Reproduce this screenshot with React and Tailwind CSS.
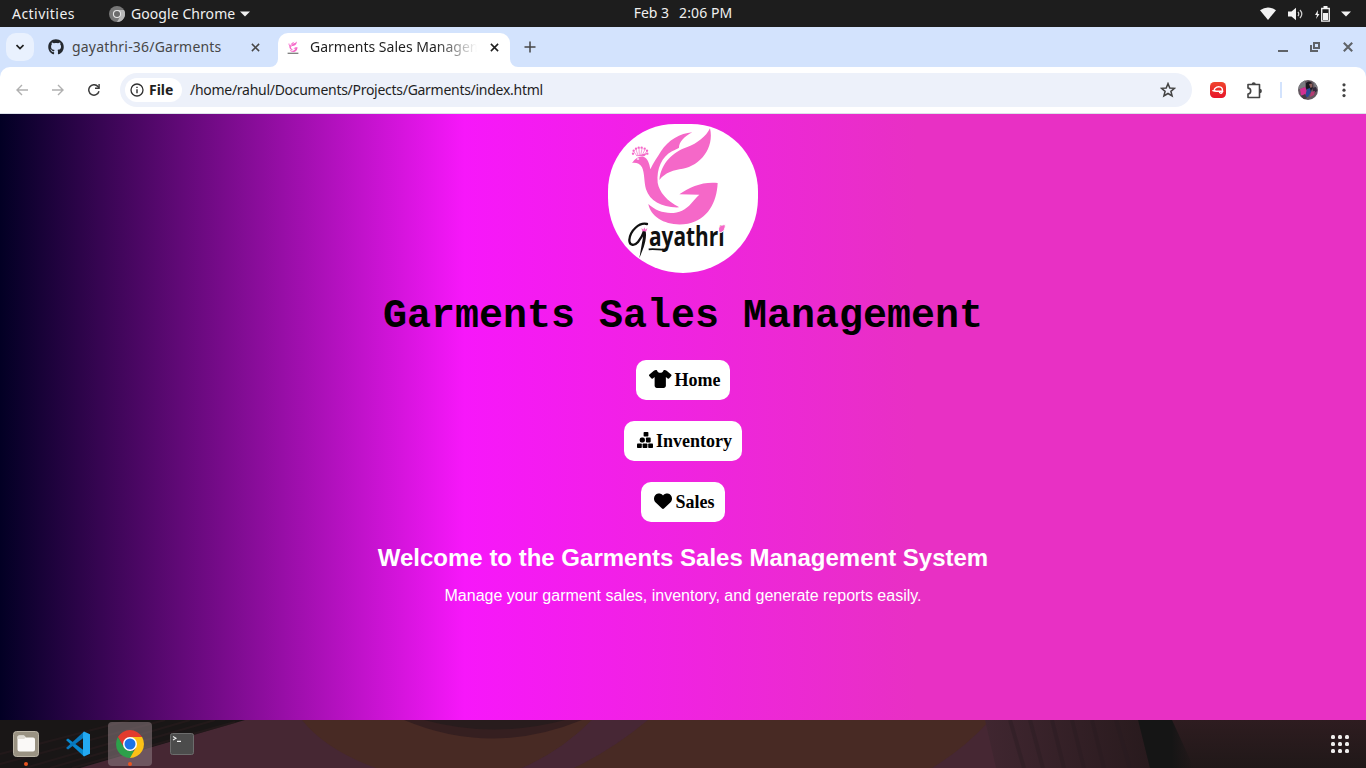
import { FaShirt, FaHeart } from "react-icons/fa6";
import { FaGithub } from "react-icons/fa";

function PeacockMark() {
  return (
    <g fill="#f568c8">
      <path d="M330 37C318 62 292 82 262 93C220 108 184 138 178 192C196 168 222 162 248 158C300 150 344 96 330 37Z" />
      <path d="M277 49C240 52 205 72 183 106C172 124 160 140 151 160C148 142 143 127 132 123C120 119 108 125 96 141C108 139 120 143 126 154C134 170 132 200 138 220C150 256 186 276 238 274C200 254 178 228 173 200C169 158 186 122 216 106C226 101 233 98 237 95C237 78 254 60 277 49Z" />
      <path d="M145 264C172 290 214 298 246 284C268 274 280 252 298 236L238 235C270 212 310 196 353 201C350 260 324 310 264 323C206 334 152 306 145 264Z" />
      <circle cx="99" cy="113" r="3.5" /><circle cx="101" cy="104" r="3.5" /><circle cx="108" cy="98" r="3.5" /><circle cx="116" cy="95" r="3.5" />
      <circle cx="125" cy="95" r="3.5" /><circle cx="134" cy="98" r="3.5" /><circle cx="141" cy="104" r="3.5" /><circle cx="142" cy="113" r="3.5" />
      <path d="M110 119H134L140 112M111 120L101 106M114 118L108 101M118 118L117 97M122 118L126 98M126 119L134 102M129 121L140 106" stroke="#f568c8" strokeWidth="2" />
      <ellipse cx="114" cy="129" rx="4" ry="2" fill="#fff" />
    </g>
  );
}

function Logo() {
  return (
    <svg viewBox="24 24 450 447" className="h-[149px] w-[150px] rounded-t-[67px] rounded-b-[75px] bg-white">
      <PeacockMark />
      <path d="M141 324C118 318 90 344 88 372C88 390 104 390 114 378C122 368 128 358 131 348" stroke="#111" strokeWidth="7" fill="none" strokeLinecap="round" />
      <path d="M128 346H137C140 360 136 378 131 394L118 427L126 380C129 368 130 356 128 346Z" fill="#111" />
      <path d="M127 346L124 336L130 341L133 334L136 341L142 336L139 346Z" fill="#f568c8" />
      <text x="147" y="389" textLength="227" lengthAdjust="spacingAndGlyphs" fontSize="78" fontWeight="700" fill="#111" className="font-['Open_Sans',sans-serif]">ayathri</text>
      <path d="M146 400C162 398 184 401 202 402" stroke="#111" strokeWidth="5" fill="none" />
      <path d="M357 348C352 334 360 326 376 326C376 340 370 350 358 350Z" fill="#f568c8" stroke="#fff" strokeWidth="3" />
    </svg>
  );
}

function CloseIcon({ className }) {
  return (
    <svg viewBox="0 0 10 10" className={className}>
      <path d="M1 1L9 9M9 1L1 9" stroke="currentColor" strokeWidth="1.7" fill="none" />
    </svg>
  );
}

function TopBar() {
  return (
    <div className="grid h-[27px] grid-cols-[1fr_auto_1fr] items-center bg-[#1d1d1d] text-[14px] leading-[27px] text-[#f0f0f0]">
      <div className="flex items-center pl-3">
        <span className="w-[63px] whitespace-nowrap tracking-[0.46px]">Activities</span>
        <svg viewBox="0 0 16 16" className="ml-[34px] h-4 w-4">
          <circle cx="8" cy="8" r="8" fill="#777" />
          <path d="M8 4H15A8 8 0 0 1 8 16L11.5 10Z" fill="#b9b9b9" />
          <circle cx="8" cy="8" r="4.1" fill="#e8e8e8" />
          <circle cx="8" cy="8" r="3" fill="#6b6b6b" />
        </svg>
        <span className="ml-[6px] w-[104px] whitespace-nowrap tracking-[0.07px]">Google Chrome</span>
        <svg viewBox="0 0 10 6" className="ml-[5px] h-[6px] w-[10px]"><path d="M0 .5H10L5 5.5Z" fill="#f0f0f0" /></svg>
      </div>
      <div className="flex gap-[10px] pb-[2px] leading-[25px] whitespace-nowrap"><span>Feb 3</span><span className="tracking-[0.1px]">2:06 PM</span></div>
      <div className="flex items-center justify-end pr-[15px]">
        <svg viewBox="0 0 16 13" className="h-[13px] w-4"><path d="M0 3.2Q8-2 16 3.2L8 13Z" fill="#f2f2f2" /></svg>
        <svg viewBox="0 0 16 14" className="ml-3 h-[14px] w-4">
          <path d="M0 4.5H3.5L8 .8V13.2L3.5 9.5H0Z" fill="#f2f2f2" />
          <path d="M10 4.8Q11.5 7 10 9.2M12 3Q15.6 7 12 11" stroke="#d0d0d0" strokeWidth="1.2" fill="none" />
        </svg>
        <svg viewBox="0 0 15 16" className="ml-[11px] h-4 w-[15px]">
          <path d="M3 4L0 9H2L1 13L4.5 8H2.7Z" fill="#f2f2f2" />
          <path d="M6.7 2.5H14.3V15.2H6.7Z" stroke="#f2f2f2" strokeWidth="1.3" fill="none" />
          <path d="M8.5 0H12.5V2.5H8.5ZM8 7H13V14H8Z" fill="#f2f2f2" />
        </svg>
        <svg viewBox="0 0 10 6" className="ml-[11px] h-[6px] w-[10px]"><path d="M0 .5H10L5 5.5Z" fill="#f2f2f2" /></svg>
      </div>
    </div>
  );
}

function TabStrip() {
  return (
    <div className="flex h-10 bg-[#d3e3fd] text-[14px]">
      <div className="ml-[6px] mt-[6px] flex h-7 w-7 items-center justify-center rounded-[10px] bg-[#e9f1fe]">
        <svg viewBox="0 0 8 6" className="h-[6px] w-2"><path d="M.5 1L4 4.5L7.5 1" stroke="#1f1f1f" strokeWidth="1.7" fill="none" /></svg>
      </div>
      <div className="flex h-10 w-[236px] items-center pl-[14px] text-[#474747]">
        <FaGithub className="size-[16px] text-[#24292f]" />
        <span className="ml-2 w-[149px] pb-[2px] whitespace-nowrap tracking-[0.2px]">gayathri-36/Garments</span>
        <CloseIcon className="ml-[30px] size-[9px]" />
      </div>
      <svg viewBox="0 0 8 8" className="h-2 w-2 self-end"><path d="M8 0A8 8 0 0 1 0 8H8Z" fill="#fff" /></svg>
      <div className="mt-[6px] flex h-[34px] w-[232px] items-center rounded-t-[10px] bg-white pb-[6px] pl-[9px] text-[#1f1f1f]">
        <svg viewBox="80 30 300 350" className="h-[13px] w-3">
          <PeacockMark />
          <path d="M85 345H375V375H85Z" fill="#666" />
        </svg>
        <span className="ml-[11px] w-[167px] overflow-hidden bg-linear-to-r from-[#1f1f1f] from-75% to-transparent bg-clip-text pb-[2px] whitespace-nowrap text-transparent">Garments Sales Management</span>
        <CloseIcon className="ml-[13px] size-[9px]" />
      </div>
      <svg viewBox="0 0 8 8" className="h-2 w-2 self-end"><path d="M0 0A8 8 0 0 0 8 8H0Z" fill="#fff" /></svg>
      <svg viewBox="0 0 12 12" className="ml-[6px] mt-[14px] size-3"><path d="M6 .5V11.5M.5 6H11.5" stroke="#474747" strokeWidth="1.5" /></svg>
      <div className="ml-auto flex items-center pr-[13px] text-[#5f6368]">
        <svg viewBox="0 0 10 10" className="size-[10px]"><path d="M0 9H10" stroke="currentColor" strokeWidth="2" /></svg>
        <svg viewBox="0 0 10 10" className="ml-[22px] size-[10px]"><path d="M4 1H9V6H4ZM1 3V9H8" stroke="currentColor" strokeWidth="2" fill="none" /></svg>
        <svg viewBox="0 0 10 10" className="ml-[23px] size-[10px]"><path d="M.8.8L9.2 9.2M9.2.8L.8 9.2" stroke="currentColor" strokeWidth="2.1" /></svg>
      </div>
    </div>
  );
}

function Toolbar() {
  return (
    <div className="bg-[#d3e3fd]">
      <div className="flex h-[47px] items-center rounded-t-[10px] border-b border-[#dde2ea] bg-white pr-[16px]">
        <svg viewBox="0 0 12 12" className="ml-4 size-3 text-[#b0b0b0]"><path d="M12 6H1.2M6 1L1 6L6 11" stroke="currentColor" strokeWidth="1.4" fill="none" /></svg>
        <svg viewBox="0 0 12 12" className="ml-6 size-3 text-[#b0b0b0]"><path d="M0 6H10.8M6 1L11 6L6 11" stroke="currentColor" strokeWidth="1.4" fill="none" /></svg>
        <svg viewBox="0 0 12 12" className="ml-6 size-3 text-[#3c3c3c]">
          <path d="M11 7.3A5.2 5.2 0 1 1 9.9 2.5L10.9 3.7" stroke="currentColor" strokeWidth="1.5" fill="none" />
          <path d="M11.8 0V4.9H7V3.5H10.4V0Z" fill="currentColor" />
        </svg>
        <div className="ml-5 flex h-[34px] w-[1072px] items-center rounded-full bg-[#edf1fa] pl-[5px] text-[14px] text-[#1f1f1f]">
          <div className="flex h-6 w-[57px] items-center rounded-full bg-white pl-[5px]">
            <svg viewBox="0 0 14 14" className="size-[14px]">
              <circle cx="7" cy="7" r="6" stroke="#303030" strokeWidth="1.3" fill="none" />
              <path d="M7 6.2V10.2M7 3.7V5" stroke="#303030" strokeWidth="1.4" />
            </svg>
            <span className="ml-[5px] pb-[1px] text-[14px] font-bold">File</span>
          </div>
          <span className="ml-2 pb-[2px] whitespace-nowrap tracking-[-0.28px]">/home/rahul/Documents/Projects/Garments/index.html</span>
          <svg viewBox="0 0 16 16" className="ml-auto mr-4 size-4"><path d="M8 1.6L9.8 6L14.5 6.3L10.9 9.3L12.1 14L8 11.5L3.9 14L5.1 9.3L1.5 6.3L6.2 6Z" stroke="#444" strokeWidth="1.5" fill="none" /></svg>
        </div>
        <svg viewBox="0 0 16 16" className="ml-[18px] size-4">
          <defs><linearGradient id="ext" x1="0" y1="0" x2="0" y2="1"><stop offset="0" stopColor="#f0452c" /><stop offset="1" stopColor="#e6142a" /></linearGradient></defs>
          <rect width="16" height="16" rx="4.5" fill="url(#ext)" />
          <path d="M5.2 6.2C3.2 8 5.2 9.2 7 9.2H12.8M5.2 6.2C7.4 4.2 12 4.2 12.4 7.5C12.7 9.5 12.2 10.8 10.8 11.4C9.8 11.4 9.4 10.6 9.2 9.2M2.8 8.7Q4.5 9.3 7 9.2" stroke="#fff" strokeWidth="1.4" fill="none" strokeLinecap="round" />
        </svg>
        <svg viewBox="0 0 17 17" className="ml-5 size-[17px]">
          <path d="M2 2.5H13.5V15.5H2V12C5.6 11.8 5.6 6.3 2 6.1Z" stroke="#444" strokeWidth="1.6" fill="none" strokeLinejoin="round" />
          <path d="M5.6 2.4A2.1 2.1 0 0 1 9.8 2.4ZM13.7 6.8A2.2 2.2 0 0 1 13.7 11.2Z" fill="#444" />
        </svg>
        <div className="ml-[17px] h-4 w-[2px] bg-[#d3e3fd]" />
        <svg viewBox="0 0 20 20" className="ml-4 size-5 rounded-full">
          <path d="M0 0H20V20H0Z" fill="#645860" />
          <path d="M0 0H7V7L2 9H0ZM15 0H20V8H17Z" fill="#7b7b80" />
          <path d="M8 3Q11 0 14 3L15 7L12 13L9 12L8 8Z" fill="#1b161e" />
          <path d="M2 9L7 7L9 11L7 16L3 15Z" fill="#d23092" />
          <path d="M9 9L12 8L13 12L10 17L7 17Z" fill="#2b4798" />
          <path d="M11 4L14 3.5L14.5 7L12.5 8Z" fill="#8d5f5c" />
          <path d="M14 8L18 7L19 11L16 13Z" fill="#33283a" />
          <path d="M13 12L17 11L16 15L12 17Z" fill="#b53a72" />
          <path d="M3 16L7 14L9 18L6 20Z" fill="#453a44" />
        </svg>
        <svg viewBox="0 0 4 16" className="ml-[24px] h-4 w-1" fill="#444"><circle cx="2" cy="2.8" r="1.6" /><circle cx="2" cy="8.2" r="1.6" /><circle cx="2" cy="13.6" r="1.6" /></svg>
      </div>
    </div>
  );
}

function PyramidIcon() {
  return (
    <svg viewBox="0 0 16 16" className="h-4 w-4 -translate-y-px" fill="#000">
      <rect x="6.6" y="0" width="4.8" height="4.6" rx=".8" />
      <rect x="2.7" y="5.4" width="5.2" height="5.2" rx="2" />
      <rect x="8.9" y="5.6" width="4.8" height="4.8" rx=".8" />
      <rect x="0" y="11.4" width="4.8" height="4.6" rx=".8" />
      <rect x="5.6" y="11.4" width="4.8" height="4.6" rx=".8" />
      <rect x="11.2" y="11.4" width="4.8" height="4.6" rx=".8" />
    </svg>
  );
}

function NavButton({ icon, label, className }) {
  return (
    <button className={"flex h-10 items-center rounded-[10px] bg-white pl-[13px] font-['Liberation_Serif',serif] text-[18px] font-bold whitespace-nowrap text-black " + className}>
      {icon}
      {label}
    </button>
  );
}

function Content() {
  return (
    <main className="flex h-[606px] flex-col items-center bg-[linear-gradient(90deg,#020024_0%,#f717fa_34%,#e830c4_67%)] pt-[10px]">
      <Logo />
      <h1 className="mt-[21px] font-['Liberation_Mono',monospace] text-[40px] leading-[46px] font-bold whitespace-nowrap text-black">Garments Sales Management</h1>
      <nav className="mt-5 flex flex-col items-center gap-[21px]">
        <NavButton className="w-[94px] gap-[3px]" icon={<FaShirt className="h-[18px] w-[22.5px] -translate-y-px" />} label="Home" />
        <NavButton className="w-[118px] gap-[3px]" icon={<PyramidIcon />} label="Inventory" />
        <NavButton className="w-[84px] gap-[3.5px]" icon={<FaHeart className="size-[18px] -translate-y-px" />} label="Sales" />
      </nav>
      <h2 className="mt-[22px] font-['Liberation_Sans',sans-serif] text-[24px] leading-[28px] font-bold text-white">Welcome to the Garments Sales Management System</h2>
      <p className="mt-[14px] font-['Liberation_Sans',sans-serif] text-[16px] leading-[19px] text-white">Manage your garment sales, inventory, and generate reports easily.</p>
    </main>
  );
}

function DockWallpaper() {
  return (
    <svg viewBox="0 0 1366 48" className="col-start-1 row-start-1 h-12 w-full" preserveAspectRatio="none">
      <defs>
        <linearGradient id="folds" x1="0" x2="1"><stop offset="0" stopColor="#402630" /><stop offset="1" stopColor="#281a1d" /></linearGradient>
        <linearGradient id="shade" x1="0" y1="0" x2="0" y2="1"><stop offset="0" stopColor="#2e1c20" /><stop offset="1" stopColor="#201818" /></linearGradient>
        <linearGradient id="dark" x1="0" x2="1"><stop offset="0" stopColor="#151515" /><stop offset=".6" stopColor="#151515" /><stop offset="1" stopColor="#151515" stopOpacity="0" /></linearGradient>
      </defs>
      <path d="M0 0H1366V48H0Z" fill="#462733" />
      <path d="M0 0H245L80 48H0Z" fill="#191616" />
      <path d="M0 34L130 0M0 44L165 0M25 48L190 0M50 48L215 0M72 48L235 2" stroke="#2b1c1e" strokeWidth="2" opacity=".55" />
      <path d="M302 0H592Q560 32 522 48H376Q326 30 302 0Z" fill="#482a24" />
      <path d="M404 0H582Q492 37 404 0Z" fill="#351f20" />
      <path d="M424 0H565Q494 19 424 0Z" fill="#281c1d" />
      <path d="M592 0H648Q612 30 574 48H522Q560 32 592 0Z" fill="#472735" />
      <path d="M648 0H990Q965 28 932 48H574Q612 30 648 0Z" fill="#482a24" />
      <path d="M985 0H1150V48H996Z" fill="url(#folds)" />
      <path d="M1010 0L1024 48M1030 0L1043 48M1052 0L1064 48M1072 0L1084 48M1092 0L1104 48M1116 0L1130 48" stroke="#271b20" strokeWidth="4" opacity=".35" />
      <path d="M1138 0H1366V48H1150Z" fill="url(#shade)" />
      <path d="M1138 0H1172L1194 48H1150Z" fill="url(#dark)" />
    </svg>
  );
}

function Dock() {
  return (
    <footer className="grid h-12 grid-cols-1 grid-rows-1">
      <DockWallpaper />
      <div className="relative col-start-1 row-start-1 flex items-center gap-2 pl-1 pr-[17px]">
        <div className="relative flex h-11 w-11 items-center justify-center">
          <svg viewBox="0 0 26 26" className="size-[26px]">
            <rect x=".5" y=".5" width="25" height="25" rx="3" fill="#999282" stroke="#bab4a5" />
            <path d="M4.5 8V6Q4.5 4.5 6 4.5H11L13 6.5H20Q22 6.5 22 8.5V18.5Q22 20.5 20 20.5H6.5Q4.5 20.5 4.5 18.5Z" fill="#faf9f7" />
            <path d="M4.5 8V6Q4.5 4.5 6 4.5H11L13 6.5L11 8Z" fill="#dedbd3" />
          </svg>
          <span className="absolute bottom-0 size-1 rounded-full bg-[#e95420]" />
        </div>
        <div className="flex h-11 w-11 items-center justify-center">
          <svg viewBox="0 0 26 26" className="size-[26px]">
            <path d="M1 9L3 7.5L19 19.5V25.5Z" fill="#0787ce" />
            <path d="M1 17L3 18.5L19 6.5V.5Z" fill="#0878bd" />
            <path d="M19 .5L25 3.3V22.7L19 25.5L18 24V2Z" fill="#23a9f2" />
          </svg>
        </div>
        <div className="relative flex h-11 w-11 items-center justify-center rounded bg-[#8e7e84]/55">
          <svg viewBox="0 0 28 28" className="size-7">
            <path d="M1.9 7A14 14 0 0 1 26.1 7H14L8 17.5Z" fill="#e33b2e" />
            <path d="M1.9 7L8 17.5A7 7 0 0 0 14 21H20L14 28A14 14 0 0 1 1.9 7Z" fill="#2da14a" />
            <path d="M14 7H26.1A14 14 0 0 1 14 28L20 17.5Z" fill="#fbc116" />
            <circle cx="14" cy="14" r="7" fill="#fff" /><circle cx="14" cy="14" r="5.5" fill="#1a73e8" />
          </svg>
          <span className="absolute bottom-0 size-1 rounded-full bg-[#e95420]" />
        </div>
        <div className="flex h-11 w-11 items-center justify-center">
          <svg viewBox="0 0 24 22" className="h-[22px] w-6">
            <rect x=".5" y=".5" width="23" height="21" rx="2" fill="#4c4c4c" stroke="#6c6c6c" />
            <path d="M3 3.5L6 5.3L3 7M7 8.4H11" stroke="#eee" strokeWidth="1.1" fill="none" />
          </svg>
        </div>
        <svg viewBox="0 0 18 18" className="ml-auto size-[18px]" fill="#f0eeee">
          <rect width="4" height="4" rx="1.5" /><rect x="7" width="4" height="4" rx="1.5" /><rect x="14" width="4" height="4" rx="1.5" />
          <rect y="7" width="4" height="4" rx="1.5" /><rect x="7" y="7" width="4" height="4" rx="1.5" /><rect x="14" y="7" width="4" height="4" rx="1.5" />
          <rect y="14" width="4" height="4" rx="1.5" /><rect x="7" y="14" width="4" height="4" rx="1.5" /><rect x="14" y="14" width="4" height="4" rx="1.5" />
        </svg>
      </div>
    </footer>
  );
}

export default function App() {
  return (
    <div className="h-[768px] w-[1366px] overflow-hidden font-['Noto_Sans',sans-serif]">
      <TopBar />
      <TabStrip />
      <Toolbar />
      <Content />
      <Dock />
    </div>
  );
}
